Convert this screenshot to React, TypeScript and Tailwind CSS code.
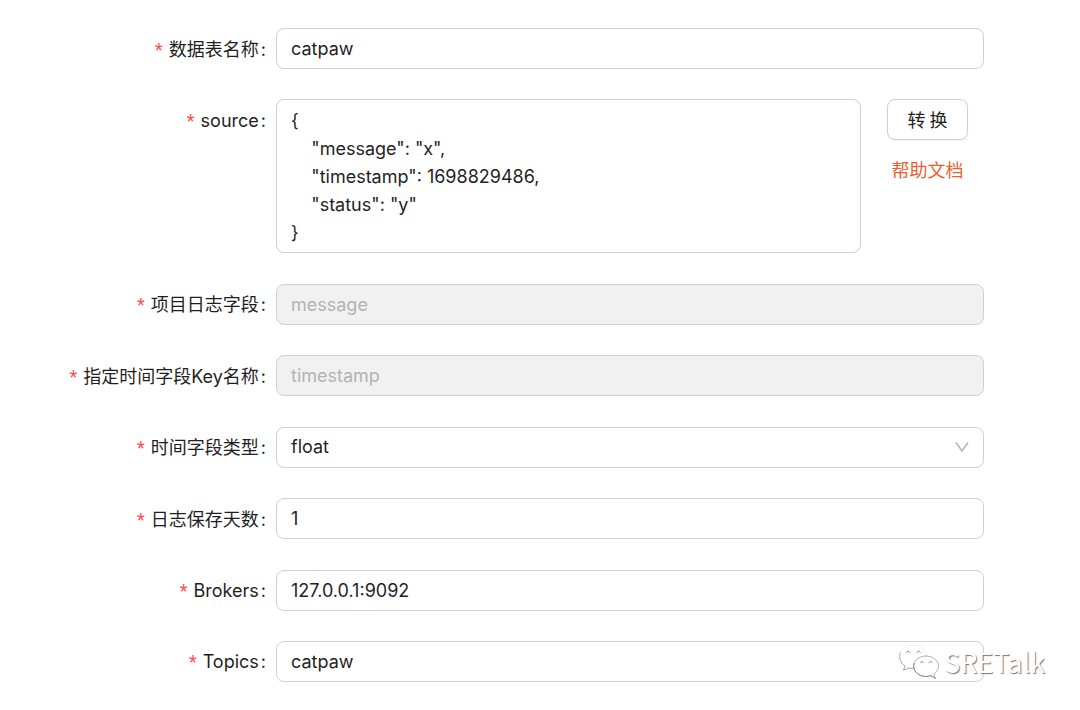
import type { ReactNode } from "react";

const control =
  "block w-full rounded-lg border border-[#d0d0d0] bg-white px-3.5 text-lg leading-7 text-[#1f1f1f] outline-none focus:border-[#e8612c]";

const sourceSample = `{
    "message": "x",
    "timestamp": 1698829486,
    "status": "y"
}`;

function FormRow({ id, label, children }: { id: string; label: string; children: ReactNode }) {
  return (
    <div className="flex items-start">
      <label
        htmlFor={id}
        className="flex h-[41px] w-[276px] shrink-0 items-center justify-end pt-0.5 pr-2.5 text-lg leading-7"
      >
        <span className="mr-1.5 font-['Roboto',sans-serif] text-[#ff4d4f]">*</span>
        {label}
        <span className="ml-0.5">:</span>
      </label>
      <div className="min-w-0 flex-1">{children}</div>
    </div>
  );
}

function TextField({
  id,
  label,
  value,
  disabled,
}: {
  id: string;
  label: string;
  value: string;
  disabled?: boolean;
}) {
  return (
    <FormRow id={id} label={label}>
      <input
        id={id}
        type="text"
        defaultValue={value}
        disabled={disabled}
        className={`${control} h-[41px] disabled:bg-[#f1f1f1] disabled:text-[#b3b3b3]`}
      />
    </FormRow>
  );
}

function Watermark() {
  return (
    <div className="pointer-events-none absolute right-[35px] bottom-[30px] flex items-center gap-1">
      <svg
        width="42"
        height="36"
        viewBox="0 0 42 36"
        strokeLinecap="round"
        strokeLinejoin="round"
        aria-hidden="true"
      >
        <path
          d="M15 1C7.300 1 1.500 6 1.500 12.500c0 4 2 7.300 5.500 9.500L5.500 26.500l5-2.500c1.500.4 3 .5 4.500.5 7.500 0 13.500-5 13.500-12S22.500 1 15 1z"
          fill="#ffffff"
          stroke="#f0f0f0"
        />
        <path
          d="M2 9c-1.500 5 .5 10 5 13L5.500 26.500l5-2.500c1.500.4 3 .5 4.500.5"
          fill="none"
          stroke="#a8a8a8"
        />
        <path
          d="M28 12c-7 0-12.500 4.500-12.500 10.200S21 32.500 28 32.500c1.800 0 3.400-.3 4.900-.8l4.400 2.600-1.300-4.300c2.800-1.900 4.500-4.500 4.500-7.800C40.500 16.500 35 12 28 12z"
          fill="#ffffff"
          stroke="#b4b4b4"
        />
        <path
          d="M16 19.500c-1.800 7 4 13 12 13 1.800 0 3.400-.3 4.900-.8l4.400 2.600"
          fill="none"
          stroke="#909090"
        />
        <path
          d="M8.500 8.500q1.700-3 3.400 0M19 8.500q1.700-3 3.400 0M22.500 18.500q1.500-2.600 3 0M31 18.500q1.500-2.600 3 0"
          stroke="#858585"
          fill="none"
        />
      </svg>
      <span className="font-['Noto_Sans_CJK_SC',sans-serif] text-[27px] leading-9 text-white [text-shadow:1px_1px_1px_#777777]">
        SRETalk
      </span>
    </div>
  );
}

export default function App() {
  return (
    <main className="relative min-h-screen bg-white font-['Inter','Noto_Sans_CJK_SC',sans-serif] text-[#1f1f1f]">
      <form className="flex min-h-screen flex-col justify-between gap-4 py-7 pr-24">
        <TextField id="table" label="数据表名称" value="catpaw" />

        <FormRow id="source" label="source">
          <div className="flex items-start">
            <textarea
              id="source"
              rows={5}
              defaultValue={sourceSample}
              className={`${control} min-w-0 flex-1 resize-none overflow-hidden pt-[7px] pb-[5px]`}
            />
            <div className="flex flex-col items-center gap-[17px] pr-4 pl-[26px]">
              <button
                type="button"
                className="flex h-[41px] w-[81px] items-center justify-center gap-1 rounded-lg border border-[#d0d0d0] bg-white pt-0.5 text-lg leading-7 shadow-xs"
              >
                <span>转</span>
                <span>换</span>
              </button>
              <a href="#help" className="text-lg leading-7 text-[#e8612c]">
                帮助文档
              </a>
            </div>
          </div>
        </FormRow>

        <TextField id="message" label="项目日志字段" value="message" disabled />
        <TextField id="time-key" label="指定时间字段Key名称" value="timestamp" disabled />

        <FormRow id="time-type" label="时间字段类型">
          <div className="relative">
            <select id="time-type" defaultValue="float" className={`${control} h-[41px] appearance-none`}>
              <option value="float">float</option>
              <option value="long">long</option>
              <option value="string">string</option>
            </select>
            <svg
              className="pointer-events-none absolute top-3.5 right-[15px]"
              width="14"
              height="12"
              viewBox="0 0 14 12"
              fill="none"
              stroke="#b0b0b0"
              strokeWidth="1.4"
              aria-hidden="true"
            >
              <path d="M1 1.500l6 8.500 6-8.500" />
            </svg>
          </div>
        </FormRow>

        <TextField id="days" label="日志保存天数" value="1" />
        <TextField id="brokers" label="Brokers" value="127.0.0.1:9092" />
        <TextField id="topics" label="Topics" value="catpaw" />
      </form>
      <Watermark />
    </main>
  );
}
